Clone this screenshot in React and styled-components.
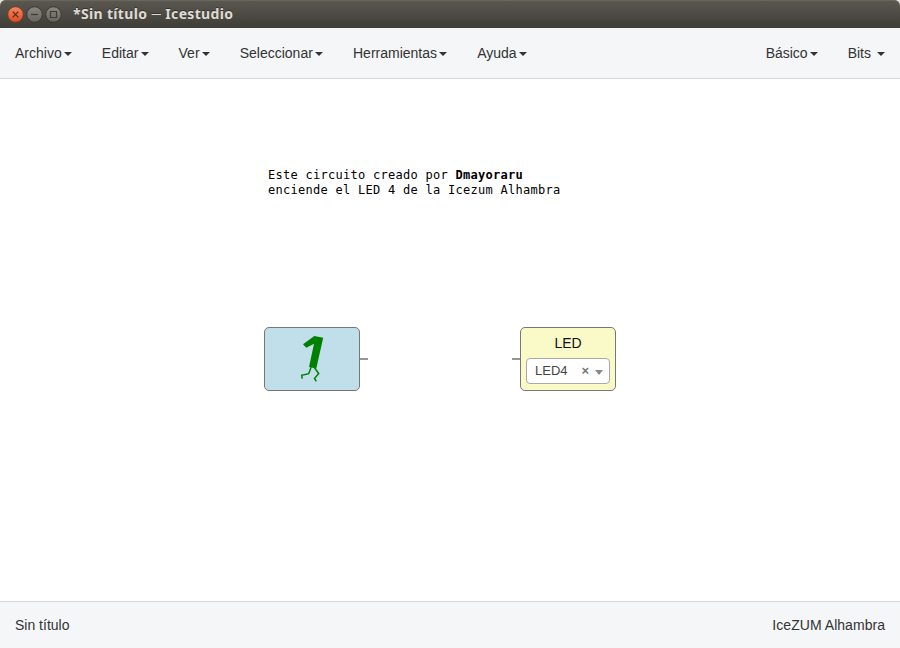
import React from "react";
import styled, { createGlobalStyle } from "styled-components";

const GlobalStyle = createGlobalStyle`
  * { box-sizing: border-box; }
  body {
    margin: 0;
    background: #e4e2e0;
    font: 14px/20px "Liberation Sans", Arial, sans-serif;
    color: #333;
  }
`;

const Window = styled.div`
  display: flex;
  flex-direction: column;
  height: 648px;
  width: 900px;
  overflow: hidden;
`;

const TitleBar = styled.header`
  display: flex;
  align-items: center;
  flex: 0 0 28px;
  height: 28px;
  min-height: 0;
  padding-left: 7px;
  border-radius: 6px 6px 0 0;
  background: linear-gradient(#5b5850, #3e3d38);
  box-shadow: inset 0 1px #69665d;
`;

const WindowButtons = styled.div`
  display: flex;
  gap: 2px;
`;

const WindowButton = styled.svg`
  display: block;
  width: 17px;
  height: 17px;
`;

const Title = styled.h1`
  margin: 0 0 0 11px;
  font: bold 14px/28px "Noto Sans", sans-serif;
  letter-spacing: 0.34px;
  color: #dfdbd2;
  text-shadow: 0 -1px #33322e;
  white-space: nowrap;
`;

const Dash = styled.span`
  font-size: 10px;
  line-height: 0;
  font-weight: 400;
  letter-spacing: 0;
  vertical-align: 2px;
`;

const MenuBar = styled.nav`
  display: flex;
  justify-content: space-between;
  flex: 0 0 51px;
  background: #f4f6f8;
  border-bottom: 1px solid #d5d9dc;
`;

const MenuGroup = styled.div`
  display: flex;
`;

const MenuItem = styled.a`
  display: flex;
  align-items: center;
  gap: ${(p) => p.$gap || 2.15}px;
  padding: 0 15px;
`;

const Caret = styled.span`
  margin-top: 1px;
  border: 4px solid transparent;
  border-top-color: #333;
  border-bottom: 0;
`;

const Canvas = styled.main`
  position: relative;
  flex: 1;
  background: #fff;
`;

const Note = styled.p`
  position: absolute;
  left: 268px;
  top: 89px;
  margin: 0;
  font: 12px/15px "DejaVu Sans Mono", monospace;
  letter-spacing: 0.276px;
  color: #000;
  white-space: pre;
`;

const Block = styled.section`
  position: absolute;
  left: ${(p) => p.$x}px;
  top: 248px;
  width: 96px;
  height: 64px;
  border: 1px solid #777;
  border-radius: 5px;
  background: ${(p) => p.$fill};
`;

const Port = styled.span`
  position: absolute;
  top: 30px;
  ${(p) => p.$side}: -9px;
  width: 8px;
  height: 2px;
  background: #969696;
`;

const Runner = styled.svg`
  display: block;
  width: 94px;
  height: 62px;
`;

const BlockLabel = styled.div`
  height: 30px;
  line-height: 31px;
  text-align: center;
  color: #111;
`;

const Select = styled.div`
  display: flex;
  align-items: center;
  height: 26px;
  margin: 0 5px;
  padding: 0 6px 0 8px;
  border: 1px solid #aaa;
  border-radius: 4px;
  background: #fff;
  font-size: 13px;
  color: #444;
`;

const Clear = styled.b`
  margin: 0 6px 0 auto;
  color: #777;
`;

const Arrow = styled.span`
  margin-top: 2px;
  border: 4px solid transparent;
  border-top: 5px solid #888;
  border-bottom: 0;
`;

const Footer = styled.footer`
  display: flex;
  align-items: center;
  justify-content: space-between;
  flex: 0 0 47px;
  padding: 0 15px;
  background: #f4f6f8;
  border-top: 1px solid #d5d9dc;
`;

const BoardName = styled.span`
  letter-spacing: 0.04px;
`;

const CONTROLS = [
  { name: "close", top: "#f7885f", bottom: "#df4b1c", ring: "#6f3928", mark: "M5.7 5.7l5.6 5.6M11.3 5.7l-5.6 5.6", ink: "#51291d" },
  { name: "minimize", top: "#8a877e", bottom: "#67645d", ring: "#34332f", mark: "M5 8.5h7", ink: "#3c3b37" },
  { name: "maximize", top: "#8a877e", bottom: "#67645d", ring: "#34332f", mark: "M5.5 5.5h6v6h-6z", ink: "#3c3b37" },
];

const MENUS = ["Archivo", "Editar", "Ver", "Seleccionar", "Herramientas", "Ayuda"];

export default function App() {
  return (
    <>
      <GlobalStyle />
      <Window>
        <TitleBar>
          <WindowButtons>
            {CONTROLS.map((c) => (
              <WindowButton key={c.name} viewBox="0 0 17 17">
                <defs>
                  <linearGradient id={c.name} x1="0" y1="0" x2="0" y2="1">
                    <stop stopColor={c.top} />
                    <stop offset="1" stopColor={c.bottom} />
                  </linearGradient>
                </defs>
                <circle cx="8.5" cy="8.5" r="7.8" fill={`url(#${c.name})`} stroke={c.ring} strokeWidth="0.9" />
                <path d={c.mark} fill="none" stroke={c.ink} strokeWidth="1.2" />
              </WindowButton>
            ))}
          </WindowButtons>
          <Title>*Sin título <Dash>—</Dash> Icestudio</Title>
        </TitleBar>
        <MenuBar>
          <MenuGroup>
            {MENUS.map((m) => (
              <MenuItem key={m}>{m}<Caret /></MenuItem>
            ))}
          </MenuGroup>
          <MenuGroup>
            <MenuItem $gap={2}>Básico<Caret /></MenuItem>
            <MenuItem $gap={6}>Bits<Caret /></MenuItem>
          </MenuGroup>
        </MenuBar>
        <Canvas>
          <Note>
            Este circuito creado por <b>Dmayoraru</b>{"\n"}enciende el LED 4 de la Icezum Alhambra
          </Note>
          <Block $x={264} $fill="#c0dfea">
            <Runner viewBox="265 328 94 62">
              <path d="M303 344.3L314.3 336L323.2 337.7L316.3 368.5L309 367L314 343.8L306.3 347.8Z" fill="#008000" />
              <path d="M311.2 367L308.7 373.7L301.7 375.3L302.2 378.7M314.3 367.5L318.7 373.5L314.5 378.5L316.3 381.3" fill="none" stroke="#008000" strokeWidth="1.5" />
            </Runner>
            <Port $side="right" />
          </Block>
          <Block $x={520} $fill="#fafac8">
            <Port $side="left" />
            <BlockLabel>LED</BlockLabel>
            <Select>LED4<Clear>×</Clear><Arrow /></Select>
          </Block>
        </Canvas>
        <Footer>
          <span>Sin título</span>
          <BoardName>IceZUM Alhambra</BoardName>
        </Footer>
      </Window>
    </>
  );
}
